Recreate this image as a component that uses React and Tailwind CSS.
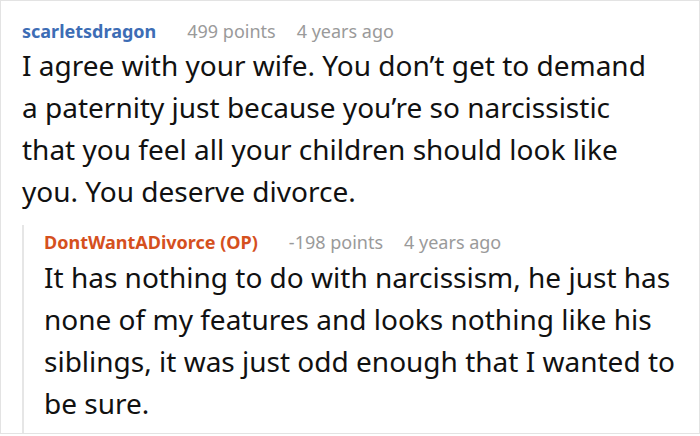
export default function App() {
  return (
    <div className="w-[700px] h-[436px] bg-white" style={{ fontFamily: '"Noto Sans", sans-serif' }}>
      <div className="h-[434px] border border-[#e3e3e3] pl-[21px] pt-[17px] overflow-hidden">
        <div className="flex items-baseline text-[18px] leading-[26px]">
          <span className="font-bold text-[#3d6db5]">scarletsdragon</span>
          <span className="ml-[31px] text-[#9a9a9a]">499 points</span>
          <span className="ml-[21px] text-[#9a9a9a]">4 years ago</span>
        </div>
        <p className="text-[28px] leading-[42px] text-[#111] w-[640px]">
          I agree with your wife. You don’t get to demand a paternity just because you’re so narcissistic that you feel all your children should look like you. You deserve divorce.
        </p>
        <div className="mt-[13px] border-l-2 border-[#e6e6e6] pl-[20px] pt-[4px] h-[220px]">
          <div className="flex items-baseline text-[18px] leading-[26px]">
            <span className="font-bold text-[#d5501e]">DontWantADivorce (OP)</span>
            <span className="ml-[31px] text-[#9a9a9a]">-198 points</span>
            <span className="ml-[21px] text-[#9a9a9a]">4 years ago</span>
          </div>
          <p className="text-[28px] leading-[42px] text-[#111] w-[640px] mt-[1px]">
            It has nothing to do with narcissism, he just has none of my features and looks nothing like his siblings, it was just odd enough that I wanted to be sure.
          </p>
        </div>
      </div>
    </div>
  );
}
